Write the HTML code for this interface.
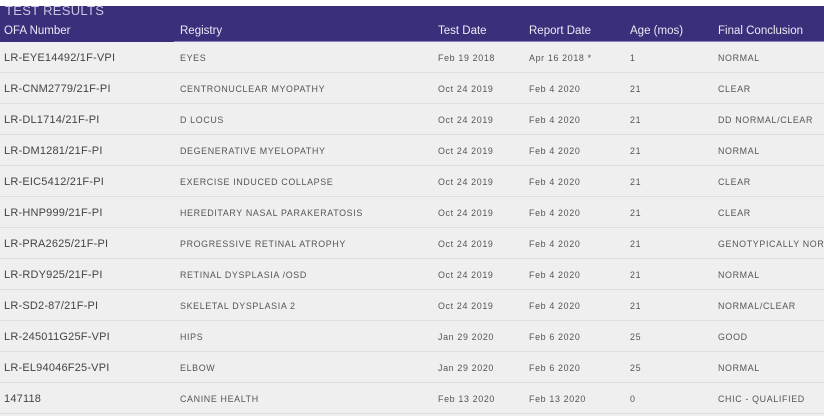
<!DOCTYPE html>
<html><head><style>
body{margin:0;width:824px;height:416px;overflow:hidden;background:#efefef;font-family:"Liberation Sans",sans-serif;position:relative}
.top{position:absolute;left:0;top:0;width:824px;height:6px;background:#fff}
.hd{position:absolute;left:0;top:6px;width:824px;height:36px;background:#3a2f7a;overflow:hidden}
.title{position:absolute;left:5px;top:-3px;color:#c9c5e0;font-size:13px;letter-spacing:.3px}
.hc{position:absolute;top:19px;color:#eceaf5;font-size:11.5px}
.line{position:absolute;left:174px;top:41px;width:650px;height:1px;background:#8a84b8}
.row{position:absolute;left:0;width:824px;height:31px;border-bottom:1px solid #dedede;box-sizing:border-box}
.c{position:absolute;top:11px;font-size:8.9px;color:#555;letter-spacing:.65px;white-space:nowrap}
.c.o{font-size:11px;letter-spacing:.2px;color:#444;top:10px}
</style></head><body>
<div class="top"></div>
<div class="hd"><div class="title">TEST RESULTS</div>
<div class="hc" style="left:4px">OFA Number</div>
<div class="hc" style="left:180px">Registry</div>
<div class="hc" style="left:438px">Test Date</div>
<div class="hc" style="left:529px">Report Date</div>
<div class="hc" style="left:630px">Age (mos)</div>
<div class="hc" style="left:718px">Final Conclusion</div>
</div>
<div class="line"></div>
<div class="row" style="top:42px"><span class="c o" style="left:4px">LR-EYE14492/1F-VPI</span><span class="c" style="left:180px">EYES</span><span class="c" style="left:438px">Feb 19 2018</span><span class="c" style="left:529px">Apr 16 2018 *</span><span class="c" style="left:630px">1</span><span class="c" style="left:718px">NORMAL</span></div>
<div class="row" style="top:73px"><span class="c o" style="left:4px">LR-CNM2779/21F-PI</span><span class="c" style="left:180px">CENTRONUCLEAR MYOPATHY</span><span class="c" style="left:438px">Oct 24 2019</span><span class="c" style="left:529px">Feb 4 2020</span><span class="c" style="left:630px">21</span><span class="c" style="left:718px">CLEAR</span></div>
<div class="row" style="top:104px"><span class="c o" style="left:4px">LR-DL1714/21F-PI</span><span class="c" style="left:180px">D LOCUS</span><span class="c" style="left:438px">Oct 24 2019</span><span class="c" style="left:529px">Feb 4 2020</span><span class="c" style="left:630px">21</span><span class="c" style="left:718px">DD NORMAL/CLEAR</span></div>
<div class="row" style="top:135px"><span class="c o" style="left:4px">LR-DM1281/21F-PI</span><span class="c" style="left:180px">DEGENERATIVE MYELOPATHY</span><span class="c" style="left:438px">Oct 24 2019</span><span class="c" style="left:529px">Feb 4 2020</span><span class="c" style="left:630px">21</span><span class="c" style="left:718px">NORMAL</span></div>
<div class="row" style="top:166px"><span class="c o" style="left:4px">LR-EIC5412/21F-PI</span><span class="c" style="left:180px">EXERCISE INDUCED COLLAPSE</span><span class="c" style="left:438px">Oct 24 2019</span><span class="c" style="left:529px">Feb 4 2020</span><span class="c" style="left:630px">21</span><span class="c" style="left:718px">CLEAR</span></div>
<div class="row" style="top:197px"><span class="c o" style="left:4px">LR-HNP999/21F-PI</span><span class="c" style="left:180px">HEREDITARY NASAL PARAKERATOSIS</span><span class="c" style="left:438px">Oct 24 2019</span><span class="c" style="left:529px">Feb 4 2020</span><span class="c" style="left:630px">21</span><span class="c" style="left:718px">CLEAR</span></div>
<div class="row" style="top:228px"><span class="c o" style="left:4px">LR-PRA2625/21F-PI</span><span class="c" style="left:180px">PROGRESSIVE RETINAL ATROPHY</span><span class="c" style="left:438px">Oct 24 2019</span><span class="c" style="left:529px">Feb 4 2020</span><span class="c" style="left:630px">21</span><span class="c" style="left:718px">GENOTYPICALLY NORMAL</span></div>
<div class="row" style="top:259px"><span class="c o" style="left:4px">LR-RDY925/21F-PI</span><span class="c" style="left:180px">RETINAL DYSPLASIA /OSD</span><span class="c" style="left:438px">Oct 24 2019</span><span class="c" style="left:529px">Feb 4 2020</span><span class="c" style="left:630px">21</span><span class="c" style="left:718px">NORMAL</span></div>
<div class="row" style="top:290px"><span class="c o" style="left:4px">LR-SD2-87/21F-PI</span><span class="c" style="left:180px">SKELETAL DYSPLASIA 2</span><span class="c" style="left:438px">Oct 24 2019</span><span class="c" style="left:529px">Feb 4 2020</span><span class="c" style="left:630px">21</span><span class="c" style="left:718px">NORMAL/CLEAR</span></div>
<div class="row" style="top:321px"><span class="c o" style="left:4px">LR-245011G25F-VPI</span><span class="c" style="left:180px">HIPS</span><span class="c" style="left:438px">Jan 29 2020</span><span class="c" style="left:529px">Feb 6 2020</span><span class="c" style="left:630px">25</span><span class="c" style="left:718px">GOOD</span></div>
<div class="row" style="top:352px"><span class="c o" style="left:4px">LR-EL94046F25-VPI</span><span class="c" style="left:180px">ELBOW</span><span class="c" style="left:438px">Jan 29 2020</span><span class="c" style="left:529px">Feb 6 2020</span><span class="c" style="left:630px">25</span><span class="c" style="left:718px">NORMAL</span></div>
<div class="row" style="top:383px"><span class="c o" style="left:4px">147118</span><span class="c" style="left:180px">CANINE HEALTH</span><span class="c" style="left:438px">Feb 13 2020</span><span class="c" style="left:529px">Feb 13 2020</span><span class="c" style="left:630px">0</span><span class="c" style="left:718px">CHIC - QUALIFIED</span></div>
</body></html>
